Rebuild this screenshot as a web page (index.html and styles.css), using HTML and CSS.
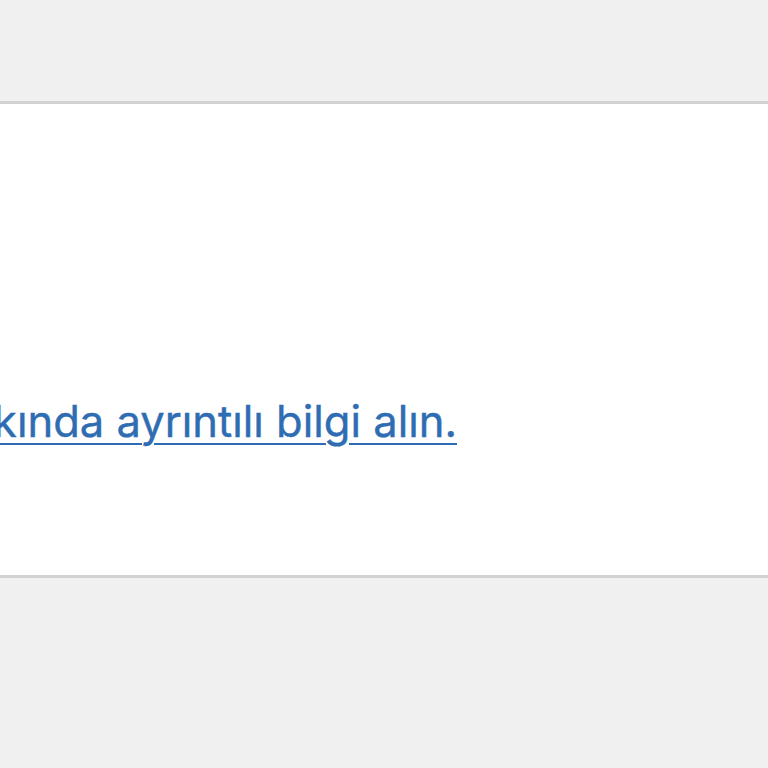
FILE: index.html
```html
<!DOCTYPE html>
<html lang="tr">
<head>
  <meta charset="UTF-8">
  <title>Bilgi</title>
  <meta name="viewport" content="width=device-width, initial-scale=1.0">
  <link rel="stylesheet" href="styles.css">
</head>
<body>
  <div class="page">
    <div class="card">
      <p class="info">
        <a href="#">Sayfalar hakkında ayrıntılı bilgi alın.</a>
      </p>
    </div>
  </div>
</body>
</html>
```

FILE: styles.css
```css
* {
  box-sizing: border-box;
}

html, body {
  margin: 0;
  padding: 0;
  height: 100%;
  background: #f0f0f1;
  font-family: Inter, "Noto Sans", sans-serif;
  overflow: hidden;
}

.page {
  padding-top: 101px;
}

.card {
  background: #fff;
  border-top: 3px solid #d2d2d4;
  border-bottom: 3px solid #d2d2d4;
  height: 477px;
  padding-top: 296px;
  overflow: hidden;
}

.info {
  margin: 0;
  font-size: 43.5px;
  line-height: 1;
  white-space: nowrap;
  display: flex;
  justify-content: flex-end;
  width: 457px;
}

.info a {
  color: #2f6db3;
  text-decoration: underline;
  text-decoration-thickness: 2px;
  text-underline-offset: 6px;
  -webkit-text-stroke: 0.4px #2f6db3;
}
```
